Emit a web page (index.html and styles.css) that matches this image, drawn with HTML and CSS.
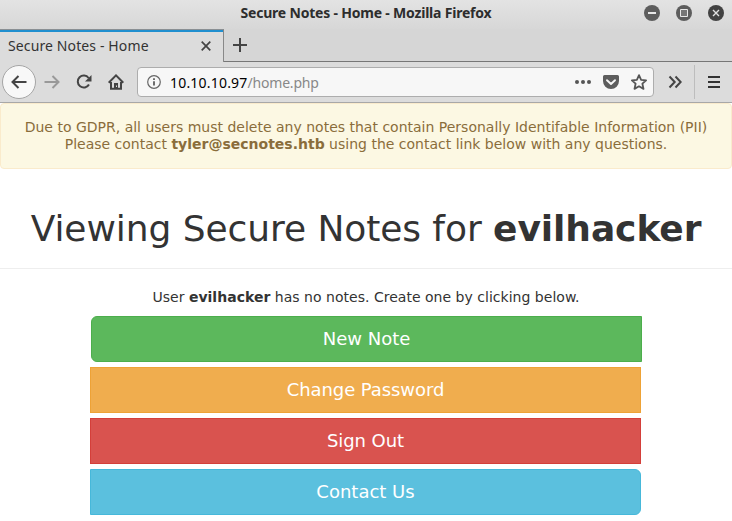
FILE: index.html
```html
<!DOCTYPE html>
<html lang="en">
<head>
<meta charset="utf-8">
<title>Secure Notes - Home</title>
<link rel="stylesheet" href="styles.css">
</head>
<body>
<header class="browser">
  <div class="titlebar">
    <span class="window-title">Secure Notes - Home - Mozilla Firefox</span>
    <div class="window-controls">
      <svg width="16" height="16" viewBox="0 0 16 16"><circle cx="8" cy="8" r="8" fill="#5d5d5d"/><path d="M4 8h8" stroke="#e8e8e8" stroke-width="2"/></svg>
      <svg width="16" height="16" viewBox="0 0 16 16"><circle cx="8" cy="8" r="8" fill="#5d5d5d"/><path d="M4.5 4.5h7v7h-7z" fill="#777" stroke="#e8e8e8"/></svg>
      <svg width="16" height="16" viewBox="0 0 16 16"><circle cx="8" cy="8" r="8" fill="#424242"/><path d="M5 5l6 6M11 5l-6 6" stroke="#e0e0e0" stroke-width="1.4"/></svg>
    </div>
  </div>
  <div class="tabs">
    <div class="tab">
      <span class="tab-title">Secure Notes - Home</span>
      <svg width="10" height="10" viewBox="0 0 10 10"><path d="M.7.7l8.6 8.6M9.3.7L.7 9.3" stroke="#444" stroke-width="1.7"/></svg>
    </div>
    <div class="tab-space"><svg width="14" height="14" viewBox="0 0 14 14"><path d="M7 0v14M0 7h14" stroke="#444" stroke-width="2"/></svg></div>
  </div>
  <div class="toolbar">
    <div class="back"><svg width="16" height="16" viewBox="0 0 16 16" class="line"><path d="M15.500 8H1.500M7.500 2l-6 6 6 6"/></svg></div>
    <svg class="line forward" width="16" height="16" viewBox="0 0 16 16"><path d="M.5 8h14M8.500 2l6 6-6 6"/></svg>
    <svg class="line reload" width="16" height="16" viewBox="0 0 16 16"><path d="M13 10.500A6 6 0 1 1 12.600 4"/><path d="M15.500 1v6.500H9z" fill="#444" stroke="none"/></svg>
    <svg class="line home" width="16" height="16" viewBox="0 0 16 16"><path d="M.7 8.700L8 1.400l7.300 7.300M3 8v6.800h10V8"/><path d="M6 15V9h4v6" fill="#444" stroke="none"/><path d="M8 11.500h1v1.500H8z" fill="#ddd" stroke="none"/></svg>
    <div class="url">
      <svg width="14" height="14" viewBox="0 0 14 14"><circle cx="7" cy="7" r="6.300" fill="none" stroke="#666" stroke-width="1.200"/><path d="M7 6.200v4.300M7 3.300v1.600" stroke="#555" stroke-width="1.700"/></svg>
      <span class="address"><span class="host">10.10.10.97</span>/home.php</span>
      <svg class="dots" width="16" height="16" viewBox="0 0 16 16" fill="#555"><circle cx="2" cy="8" r="2"/><circle cx="8" cy="8" r="2"/><circle cx="14" cy="8" r="2"/></svg>
      <svg class="pocket" width="16" height="16" viewBox="0 0 16 16"><path d="M1.500 1h13A1.500 1.500 0 0 1 16 2.500V7a8 8 0 0 1-16 0V2.500A1.500 1.500 0 0 1 1.500 1z" fill="#5d5d5d"/><path d="M4 6.200l4 3.800 4-3.800" fill="none" stroke="#f7f7f7" stroke-width="1.900" stroke-linecap="round" stroke-linejoin="round"/></svg>
      <svg width="16" height="16" viewBox="0 0 16 16"><path d="M8 1.100l2.100 4.700 5 .5-3.700 3.400 1.100 5.200L8 12.300l-4.500 2.600 1.100-5.200L.9 6.300l5-.5z" fill="none" stroke="#555" stroke-width="1.800" stroke-linejoin="round"/></svg>
    </div>
    <svg class="line more" width="14" height="14" viewBox="0 0 14 14"><path d="M1.500 1.500L6.700 7l-5.200 5.500M7.500 1.500L12.700 7l-5.200 5.500"/></svg>
    <div class="menu"><svg width="12" height="12" viewBox="0 0 12 12"><path d="M0 1h12M0 6h12M0 11h12" stroke="#333" stroke-width="2"/></svg></div>
  </div>
</header>
<main>
  <div class="alert">Due to GDPR, all users must delete any notes that contain Personally Identifable Information (PII)<br>Please contact <b>tyler@secnotes.htb</b> using the contact link below with any questions.</div>
  <h1>Viewing Secure Notes for <b>evilhacker</b></h1>
  <p class="empty">User <b>evilhacker</b> has no notes. Create one by clicking below.</p>
  <nav class="actions">
    <a class="btn new">New Note</a>
    <a class="btn password">Change Password</a>
    <a class="btn signout">Sign Out</a>
    <a class="btn contact">Contact Us</a>
  </nav>
</main>
</body>
</html>
```
FILE: styles.css
```css
* { box-sizing: border-box; }
body { margin: 0; height: 521px; overflow: hidden; background: #fff; color: #333; font: 14px/20px "DejaVu Sans", sans-serif; }
svg { display: block; flex: none; }
.browser { height: 103px; background: #dcdcdc; border-bottom: 1px solid #a8a8a8; font-family: "Noto Sans", sans-serif; }
.titlebar { height: 29px; display: grid; grid-template-columns: 1fr auto 1fr; align-items: center; padding-bottom: 3px; background: linear-gradient(#e3e3e3, #d7d7d7); }
.window-title { grid-column: 2; font-size: 14px; font-weight: 700; color: #2d2d2d; letter-spacing: -0.2px; white-space: nowrap; }
.window-controls { display: flex; justify-content: flex-end; gap: 16px; padding-right: 8px; }
.tabs { height: 33px; display: flex; }
.tab { width: 224px; display: flex; align-items: center; justify-content: space-between; padding: 0 12px 0 8px; border-top: 1px solid #8a8f93; border-right: 1px solid #888; box-shadow: inset 0 2px #208fcf; color: #333; }
.tab-title { font-size: 14px; letter-spacing: 0.12px; white-space: nowrap; }
.tab-space { flex: 1; padding: 9px; background: #d6d6d6; border-bottom: 1px solid #777; }
.toolbar { height: 40px; display: flex; align-items: center; }
.line { fill: none; stroke: #444; stroke-width: 2; }
.back { width: 34px; height: 34px; margin-left: 2px; display: grid; place-items: center; border: 1px solid #a5a5a5; border-radius: 50%; background: #f8f8f8; }
.forward { margin-left: 8px; stroke: #999; }
.reload { margin-left: 16px; }
.home { margin-left: 16px; }
.url { width: 517px; height: 30px; margin-left: 13px; padding: 0 6px 0 9px; display: flex; align-items: center; border: 1px solid #adadad; border-radius: 4px; background: #f7f7f7; }
.address { flex: 1; margin-left: 9px; padding-top: 1px; color: #888; font-size: 14px; letter-spacing: -0.2px; white-space: nowrap; }
.host { color: #000; letter-spacing: 0.2px; }
.pocket { margin: 0 12px; }
.more { margin-left: 14px; }
.menu { height: 34px; margin-left: 12px; padding-left: 13px; display: flex; align-items: center; border-left: 1px solid #bdbdbd; }
main { text-align: center; }
.alert { height: 66px; padding: 15px 0; border: 1px solid #faebcc; border-radius: 4px; background: #fcf8e3; color: #8a6d3b; line-height: 17px; white-space: nowrap; }
h1 { height: 100px; margin: 0; padding-top: 40px; border-bottom: 1px solid #eee; font-size: 36px; font-weight: 400; line-height: 40px; letter-spacing: -0.07px; white-space: nowrap; }
.empty { height: 20px; margin: 18px 0 9px; letter-spacing: 0.02px; }
.actions { display: grid; gap: 5px; width: 552px; margin-left: 90px; }
.btn { width: 551px; height: 46px; border: 1px solid; color: #fff; font-size: 18px; line-height: 44px; }
.new { justify-self: end; background: #5cb85c; border-color: #4cae4c; border-radius: 6px 0 0 6px; }
.password { background: #f0ad4e; border-color: #eea236; letter-spacing: -0.07px; }
.signout { background: #d9534f; border-color: #d43f3a; letter-spacing: -0.07px; }
.contact { background: #5bc0de; border-color: #46b8da; border-radius: 0 6px 6px 0; }
```
